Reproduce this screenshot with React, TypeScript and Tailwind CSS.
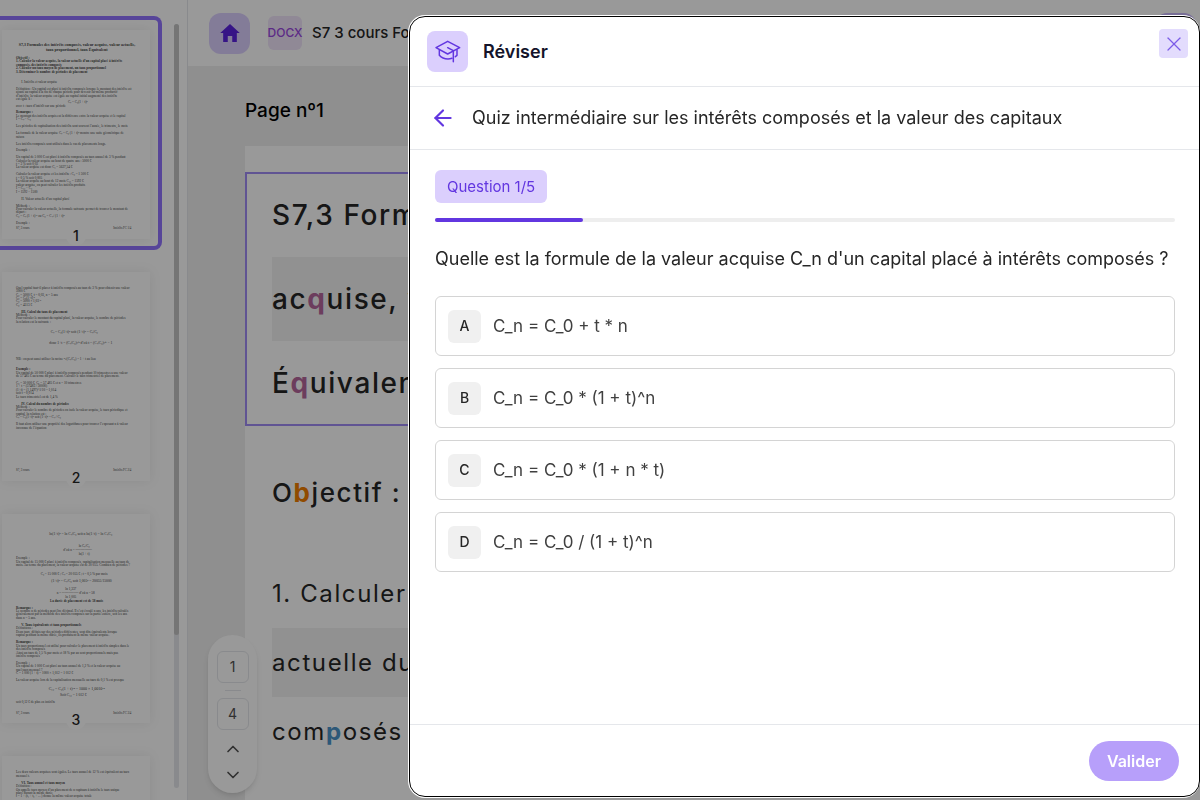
import { ReactNode } from 'react';
import { ArrowLeft, ChevronDown, ChevronUp, X } from 'lucide-react';
import { IoMdHome } from 'react-icons/io';

// x, y, font size, text, bold
type Line = [number, number, number, string, boolean?];

const pages: { id: number; lines: Line[] }[] = [
  {
    id: 1,
    lines: [
      [50, 49, 12, 'S7,3 Formules des intérêts composés, valeur acquise, valeur actuelle,', true],
      [132, 63, 12, 'taux proportionnel, taux Équivalent', true],
      [42, 86, 10, 'Objectif :', true],
      [42, 97, 10, '1. Calculer la valeur acquise, la valeur actuelle d’un capital placé à intérêts', true],
      [42, 107, 10, 'composés, des intérêts composés', true],
      [42, 117, 10, '2. Calculer un taux moyen de placement, un taux proportionnel', true],
      [42, 128, 10, '3. Déterminer le nombre de périodes de placement', true],
      [58, 158, 10, 'I.  Intérêts et valeur acquise'],
      [42, 179, 10, 'Définition : Un capital est placé à intérêts composés lorsque le montant des intérêts est'],
      [42, 190, 10, 'ajouté au capital à la fin de chaque période pour devenir lui-même productif'],
      [42, 200, 10, 'd’intérêts, la valeur acquise est égale au capital initial augmenté des intérêts'],
      [42, 210, 10, 'est égale à :'],
      [198, 220, 10, 'Cₙ = C₀(1 + t)ⁿ'],
      [42, 230, 10, 'avec t : taux d’intérêt sur une période'],
      [42, 250, 10, 'Remarque :', true],
      [42, 261, 10, 'Le montant des intérêts acquis est la différence entre la valeur acquise et le capital'],
      [42, 271, 10, 'I = Cₙ − C₀'],
      [42, 292, 10, 'Les périodes de capitalisation des intérêts sont souvent l’année, le trimestre, le mois'],
      [42, 313, 10, 'La formule de la valeur acquise Cₙ = C₀ (1 + t)ⁿ montre une suite géométrique de'],
      [42, 323, 10, 'raison'],
      [42, 344, 10, 'Les intérêts composés sont utilisés dans le cas de placements longs.'],
      [42, 364, 10, 'Exemple :'],
      [42, 385, 10, 'Un capital de 5 000 € est placé à intérêts composés au taux annuel de 3 % pendant'],
      [42, 395, 10, 'Calculer la valeur acquise au bout de quatre ans : 5000 €'],
      [42, 405, 10, 't = 3 % soit 0,03'],
      [42, 415, 10, 'La valeur acquise est donc C₄ = 5627,54 €'],
      [42, 436, 10, 'Calculer la valeur acquise et les intérêts : C₀ = 1 500 €'],
      [42, 446, 10, 't = 0,5 % soit 0,005'],
      [42, 457, 10, 'La valeur acquise au bout de 12 mois C₁₂ = 1592 €'],
      [42, 467, 10, 'valeur acquise, on peut calculer les intérêts produits'],
      [42, 478, 10, 'I = C₁₂ − C₀'],
      [42, 488, 10, 'I = 1592 − 1500'],
      [58, 509, 10, 'II. Valeur actuelle d’un capital placé'],
      [42, 530, 10, 'Méthode :'],
      [42, 540, 10, 'Pour calculer la valeur actuelle, la formule suivante permet de trouver le montant de'],
      [42, 550, 10, 'départ :'],
      [42, 560, 10, 'C₀ = Cₙ (1 + t)⁻ⁿ ou C₀ = Cₙ / (1 + t)ⁿ'],
      [42, 581, 10, 'Exemple :'],
      [42, 598, 9, 'S7, 3 cours'],
      [334, 598, 9, 'Intérêts FC 1/4'],
    ],
  },
  {
    id: 2,
    lines: [
      [42, 50, 10, 'Quel capital faut-il placer à intérêts composés au taux de 3 % pour obtenir une valeur'],
      [42, 60, 10, '5000 €'],
      [42, 71, 10, 'C₀ = 5000 €, t = 0,03, n = 5 ans'],
      [42, 81, 10, 'C₀ = Cₙ(1+t)⁻ⁿ'],
      [42, 91, 10, 'C₀ = 5000 × 1,03⁻⁵'],
      [42, 101, 10, 'C₀ = 4313 €'],
      [58, 122, 10, 'III. Calcul du taux de placement', true],
      [42, 132, 10, 'Méthode :'],
      [42, 142, 10, 'Pour calculer le montant du capital placé, la valeur acquise, le nombre de périodes'],
      [42, 152, 10, 'la relation est la suivante :'],
      [146, 182, 11, 'Cₙ = C₀(1+t)ⁿ  soit (1+t)ⁿ = Cₙ/C₀'],
      [142, 217, 11, 'donc 1+t = (Cₙ/C₀)¹⁄ⁿ  d’où t = (Cₙ/C₀)¹⁄ⁿ − 1'],
      [42, 265, 10, 'NB : on peut aussi utiliser la racine ⁿ√(Cₙ/C₀) = 1 + t au lieu'],
      [42, 295, 10, 'Exemple :', true],
      [42, 305, 10, 'Un capital de 50 000 € placé à intérêts composés pendant 10 trimestres a une valeur'],
      [42, 315, 10, 'de 57 485 € au terme du placement. Calculer le taux trimestriel de placement.'],
      [42, 336, 10, 'C₀ = 50 000 €, Cₙ = 57 485 € et n = 10 trimestres'],
      [42, 346, 10, '1 + t = (57485 / 50000)'],
      [42, 356, 10, '(1+t) = (1,1497)^1/10 = 1,014'],
      [42, 366, 10, 'soit t = 0,014'],
      [42, 377, 10, 'Le taux trimestriel est de 1,4 %'],
      [58, 398, 10, 'IV. Calcul du nombre de périodes', true],
      [42, 408, 10, 'Méthode :'],
      [42, 418, 10, 'Pour calculer le nombre de périodes on isole la valeur acquise, le taux périodique et'],
      [42, 428, 10, 'capital, la relation est :'],
      [42, 439, 10, 'Cₙ = C₀(1+t)ⁿ soit (1+t)ⁿ = Cₙ / C₀'],
      [42, 460, 10, 'Il faut alors utiliser une propriété des logarithmes pour trouver l’exposant n à valeur'],
      [42, 470, 10, 'inconnue de l’équation'],
      [42, 598, 9, 'S7, 3 cours'],
      [334, 598, 9, 'Intérêts FC 2/4'],
    ],
  },
  {
    id: 3,
    lines: [
      [142, 62, 11, 'ln(1+t)ⁿ = ln Cₙ/C₀ soit n ln(1+t) = ln Cₙ/C₀'],
      [230, 98, 10, 'ln Cₙ/C₀'],
      [184, 110, 10, 'd’où n = ───────'],
      [230, 122, 10, 'ln(1 + t)'],
      [42, 136, 10, 'Exemple :'],
      [42, 147, 10, 'Un capital de 15 000 € placé à intérêts composés, capitalisation mensuelle au taux de'],
      [42, 157, 10, 'mois. Au terme du placement, la valeur acquise est de 20 055. Combien de périodes ?'],
      [116, 182, 10, 'C₀ = 15 000 € ; Cₙ = 20 055 € ; t = 0,5 % par mois'],
      [148, 203, 11, '(1+t)ⁿ = Cₙ/C₀ soit 1,005ⁿ = 20055/15000'],
      [190, 228, 10, 'ln 1,337'],
      [164, 240, 10, 'n = ───────   d’où n = 58'],
      [190, 252, 10, 'ln 1,005'],
      [144, 265, 10, 'La durée de placement est de 58 mois', true],
      [42, 284, 10, 'Remarque :', true],
      [42, 294, 10, 'Le nombre n de périodes peut être décimal. Il s’est écoulé n ans, les intérêts calculés'],
      [42, 304, 10, 'généralement par la méthode des intérêts composés sur la partie entière, soit les ans'],
      [42, 314, 10, 'dans n = 5 ans.'],
      [58, 336, 10, 'V.  Taux équivalents et taux proportionnels', true],
      [42, 346, 10, 'Définitions :'],
      [42, 356, 10, 'Deux taux, définis sur des périodes différentes, sont dits équivalents lorsque'],
      [42, 367, 10, 'capital pendant la même durée, ils produisent la même valeur acquise.'],
      [42, 387, 10, 'Remarque :', true],
      [42, 398, 10, 'Un taux proportionnel est utilisé pour calculer le placement à intérêts simples dans le'],
      [42, 408, 10, 'des intérêts composés'],
      [42, 419, 10, 'Ainsi un taux de 1,5 % par mois et 18 % par an sont proportionnels mais pas'],
      [42, 429, 10, 'intérêts composés'],
      [42, 449, 10, 'Exemple :'],
      [42, 460, 10, 'Un capital de 1 000 € est placé au taux annuel de 1,2 % et la valeur acquise au'],
      [42, 470, 10, 'quel taux mensuel ?'],
      [42, 480, 10, 'C = 1 000 (1 + t) = 1000 × 1,012 = 1 012 €'],
      [42, 501, 10, 'La valeur acquise lors de la capitalisation mensuelle au taux de 0,1 % est presque'],
      [140, 527, 12, 'C₁₂ = C₀(1 + t)¹² = 1000 × 1,0010¹²'],
      [174, 546, 11, 'Soit C₁₂ = 1 012 €'],
      [42, 566, 10, 'soit 0,12 € de plus en intérêts'],
      [42, 601, 9, 'S7, 3 cours'],
      [334, 601, 9, 'Intérêts FC 3/4'],
    ],
  },
  {
    id: 4,
    lines: [
      [42, 52, 10, 'Les deux valeurs acquises sont égales. Le taux annuel de 12 % est équivalent au taux'],
      [42, 62, 10, 'mensuel t.'],
      [58, 83, 10, 'VI. Taux annuel et taux moyen', true],
      [42, 93, 10, 'Définition :'],
      [42, 104, 10, 'On appelle taux moyen d’un placement de n capitaux à intérêts le taux unique'],
      [42, 114, 10, 'placé durant la même durée'],
      [42, 124, 10, 't = 1 + (t₁ + t₂ + ... ) donne la même valeur acquise totale'],
    ],
  },
];

const answers = [
  { letter: 'A', text: 'C_n = C_0 + t * n' },
  { letter: 'B', text: 'C_n = C_0 * (1 + t)^n' },
  { letter: 'C', text: 'C_n = C_0 * (1 + n * t)' },
  { letter: 'D', text: 'C_n = C_0 / (1 + t)^n' },
];

function GraduationCap() {
  return (
    <svg viewBox="102 120 84 74" className="w-7" fill="none" stroke="currentColor" strokeWidth="4.5" strokeLinejoin="round" strokeLinecap="round">
      <path d="M108 146L143 127l36 19-36 19z" />
      <path d="M118 153v16c6 7 15 11 26 11 5 0 9-1 12-2M171 152v17l-5 4" />
      <path d="M143 146l17 9v33" />
    </svg>
  );
}

function Thumbnail({ id, lines, active }: { id: number; lines: Line[]; active?: boolean }) {
  return (
    <button
      className={`relative block w-full shrink-0 rounded-r-lg border-4 border-l-0 pt-[10px] pr-2 pb-[7px] pl-[2px] ${
        active ? 'border-[#9273ff]' : 'border-transparent'
      }`}
    >
      <svg viewBox="0 0 444 627" className="block w-full bg-white shadow-[0_0_12px_rgba(0,0,0,0.08)]" fontFamily="Liberation Serif, serif" fill="#444">
        {lines.map(([x, y, size, text, bold], i) => (
          <text key={i} x={x} y={y} fontSize={size} fontWeight={bold ? 700 : 400}>
            {text}
          </text>
        ))}
      </svg>
      <span className="absolute right-[6px] bottom-0 left-0 mx-auto flex size-5 items-center justify-center rounded-full bg-white text-sm font-medium text-neutral-800">
        {id}
      </span>
    </button>
  );
}

function Sidebar() {
  return (
    <aside className="flex w-47 shrink-0 overflow-hidden border-r border-gray-200 bg-white">
      <div className="flex w-[162px] shrink-0 flex-col gap-2 pt-4">
        {pages.map((p) => (
          <Thumbnail key={p.id} id={p.id} lines={p.lines} active={p.id === 1} />
        ))}
      </div>
      {/* scrollbar */}
      <div className="mt-6 mb-3 ml-3 w-[5px] rounded-full bg-gray-200">
        <div className="h-4/5 rounded-full bg-[#c4c4c4]" />
      </div>
    </aside>
  );
}

function Mark({ color, children }: { color: string; children: ReactNode }) {
  return <b className={color}>{children}</b>;
}

function DocumentView() {
  return (
    <main className="min-w-0 flex-1 overflow-hidden bg-[#eee] pl-[57px]">
      <h2 className="pt-[33px] pb-[23px] text-[19px] font-medium leading-6 text-black">Page nº1</h2>
      <article className="min-h-screen bg-white pt-[26px] tracking-widest whitespace-nowrap text-neutral-800">
        <h1 className="border-2 border-[#a08cf5] text-[28px] font-medium leading-[84px]">
          <span className="-mt-[1px] block pl-[25px]">S7,3 Formules des intérêts</span>
          <span className="ml-[25px] block bg-[#f2f2f2]">
            ac<Mark color="text-[#b5679c]">q</Mark>uise, valeur actuelle
          </span>
          <span className="-mb-[1px] block pl-[25px]">
            É<Mark color="text-[#b5679c]">q</Mark>uivalent
          </span>
        </h1>
        <h2 className="mt-8 pl-[27px] text-[26px] font-medium leading-[69px]">
          O<Mark color="text-[#f07d00]">b</Mark>jectif :
        </h2>
        <p className="mt-8 ml-[27px] text-2xl leading-[69px]">
          <span className="block">1. Calculer la valeur</span>
          <span className="block bg-[#f2f2f2]">actuelle du capital</span>
          <span className="block">
            com<Mark color="text-[#4b93c9]">p</Mark>osés
          </span>
        </p>
      </article>
    </main>
  );
}

function PageNav() {
  return (
    <nav aria-label="Pages" className="absolute bottom-[7px] left-[208px] flex w-[49px] flex-col items-center rounded-full bg-white pt-4 pb-2 text-sm text-neutral-600 shadow-md">
      <button className="size-8 rounded-md border border-gray-200">1</button>
      <span className="my-[7px] h-px w-4 bg-gray-200" />
      <button className="size-8 rounded-md border border-gray-200">4</button>
      <button aria-label="Page précédente" className="mt-[9px]">
        <ChevronUp className="size-5" />
      </button>
      <button aria-label="Page suivante" className="mt-[6px]">
        <ChevronDown className="size-5" />
      </button>
    </nav>
  );
}

function QuizDialog() {
  return (
    <div className="fixed inset-0 flex justify-end bg-black/40 pt-[15px] pb-[2px]">
      <div className="flex w-[66%] rounded-[17px] bg-white py-px pl-px">
        <section role="dialog" aria-labelledby="quiz-title" className="flex min-w-0 flex-1 flex-col rounded-2xl border border-black bg-white">
          <header className="flex h-[70px] shrink-0 items-center gap-[15px] border-b border-gray-200 pr-[11px] pl-[17px]">
            <span className="flex size-[41px] items-center justify-center rounded-lg bg-[#dbcffd] text-[#6236e0]">
              <GraduationCap />
            </span>
            <h2 id="quiz-title" className="flex-1 text-lg font-semibold text-[#14142b]">
              Réviser
            </h2>
            <button aria-label="Fermer" className="mt-3 flex size-[29px] items-center justify-center self-start rounded bg-[#e3dcfd] text-[#7c5ce8]">
              <X className="size-6" strokeWidth={1.3} />
            </button>
          </header>

          <div className="flex h-[63px] shrink-0 items-center gap-4 border-b border-gray-200 pl-5 text-[#262626]">
            <button aria-label="Retour" className="text-[#6236e0]">
              <ArrowLeft className="size-[26px]" />
            </button>
            <h3 className="text-lg">Quiz intermédiaire sur les intérêts composés et la valeur des capitaux</h3>
          </div>

          <div className="flex-1 pt-5 pr-6 pl-[25px] text-[#262626]">
            <span className="inline-block rounded-md bg-[#dbcffd] px-3 text-[15px] leading-[33px] text-[#6236e0]">Question 1/5</span>
            <div className="mt-[15px] h-1 rounded-full bg-[#eee]">
              <div className="h-full rounded-full bg-[#6236e0]" style={{ width: `${(1 / 5) * 100}%` }} />
            </div>
            <p className="mt-[25px] text-lg leading-6">Quelle est la formule de la valeur acquise C_n d'un capital placé à intérêts composés ?</p>
            <div className="mt-[25px] flex flex-col gap-3">
              {answers.map((a) => (
                <button key={a.letter} className="flex h-15 items-center gap-3 rounded-md border border-[#d4d4d4] px-3 text-left">
                  <span className="flex size-[33px] items-center justify-center rounded-md bg-[#f0f0f0] text-sm font-medium">{a.letter}</span>
                  <span className="text-[17px] leading-6 text-[#404040]">{a.text}</span>
                </button>
              ))}
            </div>
          </div>

          <footer className="flex h-[72px] shrink-0 items-center justify-end border-t border-gray-200 px-5">
            <button className="h-10 rounded-full bg-[#b79ffa] px-[18px] text-base font-semibold text-white">Valider</button>
          </footer>
        </section>
      </div>
    </div>
  );
}

export default function App() {
  return (
    <div className="relative flex h-screen overflow-hidden bg-white font-['Inter',sans-serif]">
      <Sidebar />
      <div className="flex min-w-0 flex-1 flex-col">
        <header className="flex h-[66px] shrink-0 items-center gap-[10px] bg-white pr-1 pl-[21px]">
          <button aria-label="Accueil" className="mr-2 flex size-[41px] shrink-0 items-center justify-center rounded-xl bg-[#dbcffd] text-[#5a22e0]">
            <IoMdHome className="size-6" />
          </button>
          <span className="flex size-[34px] shrink-0 items-center justify-center rounded-md bg-[#f0e4fb] text-xs font-medium text-[#9a48e0]">DOCX</span>
          <h1 className="flex-1 text-[15px] font-medium whitespace-nowrap text-neutral-800">S7 3 cours Formules des intérêts</h1>
          <button aria-label="Menu" className="size-[41px] shrink-0 rounded-xl bg-[#c9b8fb]" />
        </header>
        <DocumentView />
      </div>
      <PageNav />
      <QuizDialog />
    </div>
  );
}
